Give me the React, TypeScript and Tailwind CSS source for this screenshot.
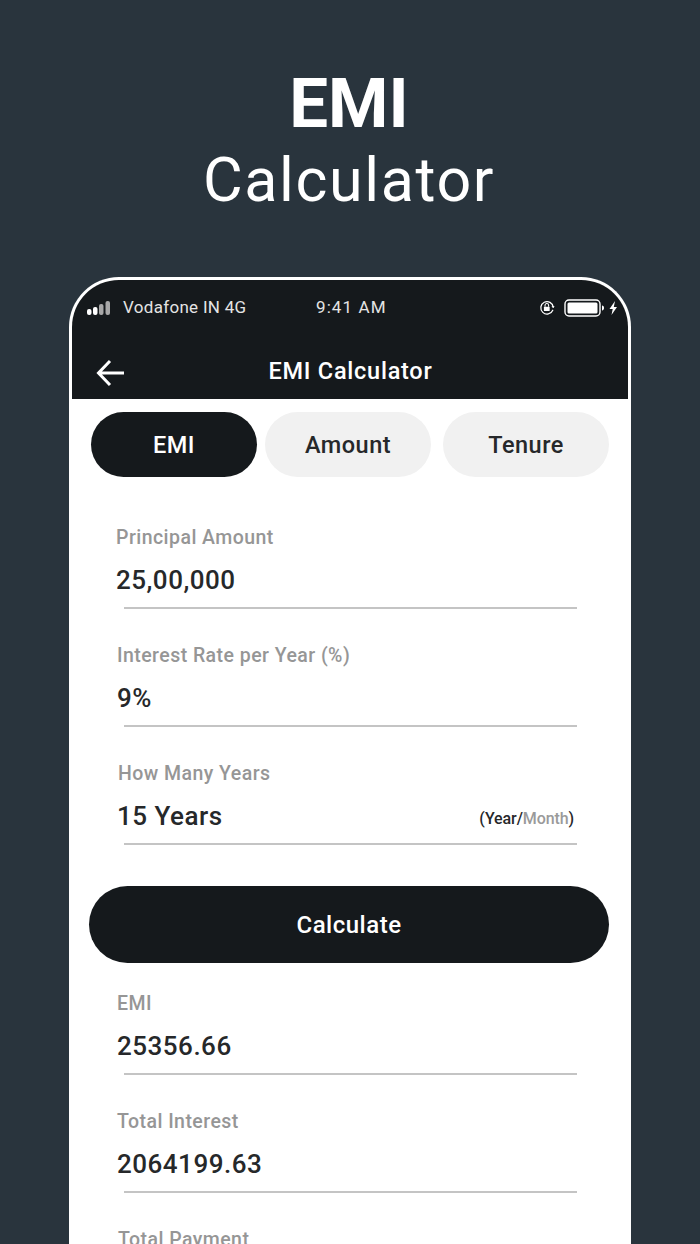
const font = { fontFamily: "Roboto, sans-serif" };

type FieldProps = {
  label: string;
  value: string;
  pad: string;
  note?: boolean;
};

function Field({ label, value, pad, note }: FieldProps) {
  return (
    <div className="h-[118px] pt-[11px]">
      <div className={`${pad} text-[19.5px] font-medium leading-[24px] tracking-[0.45px] text-[#969696]`}>{label}</div>
      <div className={`${pad} mt-[13px] flex h-[34px] items-center justify-between pr-[54px]`}>
        <span className={note ? "-ml-px text-[26px] font-medium leading-[34px] tracking-[0.5px] text-[#26282a]" : "text-[26px] font-medium leading-[34px] tracking-[0.5px] text-[#26282a]"}>{value}</span>
        {note && (
          <span className="mt-[6px] text-[16px] font-medium leading-[20px] tracking-[-0.1px] text-[#26282a]">
            (Year/<span className="text-[#9a9a9a]">Month</span>)
          </span>
        )}
      </div>
      <div className="ml-[52px] mt-[10px] h-[1.5px] w-[453px] bg-[#c4c4c4]" />
    </div>
  );
}

function Tab({ label, active }: { label: string; active?: boolean }) {
  return (
    <div
      className={
        active
          ? "flex h-[65px] w-[166px] items-center justify-center rounded-full bg-[#15191c] pt-[2px] text-[23.5px] font-medium tracking-[0.5px] text-white"
          : "flex h-[65px] w-[166px] items-center justify-center rounded-full bg-[#f1f1f1] pt-[2px] text-[23.5px] font-medium tracking-[0.5px] text-[#26282a]"
      }
    >
      {label}
    </div>
  );
}

function Signal() {
  return (
    <svg width="26" height="16" viewBox="0 0 26 16">
      <rect x="1" y="9" width="4.5" height="6" rx="2" fill="#fff" />
      <rect x="7" y="7" width="4.5" height="8" rx="2" fill="#fff" />
      <rect x="13" y="4" width="4.5" height="11" rx="2" fill="#a8a8a8" />
      <rect x="19.5" y="1" width="4.5" height="14" rx="2" fill="#a8a8a8" />
    </svg>
  );
}

function RotationLock() {
  return (
    <svg width="16" height="16" viewBox="0 0 18 18" fill="none">
      <path d="M15.5 11.5A7 7 0 1 1 16 8" stroke="#fff" strokeWidth="1.4" strokeLinecap="round" />
      <path d="M14 7l2 2 1.6-2.2" fill="#fff" />
      <rect x="5.5" y="7.5" width="6.5" height="5" rx="0.8" fill="#fff" />
      <path d="M6.8 7.5V6a2 2 0 0 1 4 0v1.5" stroke="#fff" strokeWidth="1.2" />
    </svg>
  );
}

function Battery() {
  return (
    <svg width="54" height="18" viewBox="0 0 54 18" fill="none">
      <rect x="1" y="1" width="35" height="16" rx="4" stroke="#fff" strokeWidth="1.4" />
      <rect x="3.5" y="3.5" width="30" height="11" rx="1.5" fill="#fff" />
      <path d="M38 6.5c1.5.3 2 1.2 2 2.5s-.5 2.2-2 2.5z" fill="#fff" />
      <path d="M51 2l-5.500 8h3.200l-1.200 6 5.500-8h-3.200z" fill="#fff" />
    </svg>
  );
}

export default function App() {
  return (
    <div className="h-[1244px] w-[700px] overflow-hidden bg-[#29343d]" style={font}>
      <div className="flex h-[277px] flex-col items-center pr-[2px] pt-[66px] text-white">
        <div className="text-[69px] font-bold leading-[76px]">EMI</div>
        <div className="text-[61px] font-normal leading-[76px] tracking-[1.6px]">Calculator</div>
      </div>

      <div className="mx-[69px] h-[967px] overflow-hidden rounded-t-[50px] border-x-[3px] border-t-[3px] border-white bg-white">
        <div className="h-[119px] bg-[#15191c] text-white">
          <div className="flex h-[55px] items-center pl-[14px] pr-[10px]">
            <Signal />
            <span className="ml-[11px] w-[193px] text-[17px] tracking-[0.3px] text-[#e4e4e4]">Vodafone IN 4G</span>
            <span className="text-[17px] tracking-[1.1px] text-[#e4e4e4]">9:41 AM</span>
            <div className="ml-auto flex items-center gap-[9px]">
              <RotationLock />
              <Battery />
            </div>
          </div>
          <div className="relative flex h-[64px] items-center justify-center pl-[1px] pt-[9px]">
            <svg className="absolute left-[24px] top-[23px]" width="30" height="30" viewBox="0 0 30 30" fill="none">
              <path d="M2.500 15H28M14 3L2.500 15 14 27" stroke="#fff" strokeWidth="3" />
            </svg>
            <span className="text-[23.5px] font-medium tracking-[0.75px]">EMI Calculator</span>
          </div>
        </div>

        <div className="flex pl-[19px] pt-[13px]">
          <Tab label="EMI" active />
          <div className="ml-[8px]">
            <Tab label="Amount" />
          </div>
          <div className="ml-[12px]">
            <Tab label="Tenure" />
          </div>
        </div>

        <div className="pt-[38px]">
          <Field label="Principal Amount" value="25,00,000" pad="pl-[44px]" />
          <Field label="Interest Rate per Year (%)" value="9%" pad="pl-[45px]" />
          <Field label="How Many Years" value="15 Years" pad="pl-[46px]" note />
        </div>

        <div className="ml-[17px] mt-[17px] flex h-[77px] w-[520px] items-center justify-center rounded-full bg-[#15191c] text-[24px] font-medium tracking-[0.5px] text-white">
          Calculate
        </div>

        <div className="mt-[18px]">
          <Field label="EMI" value="25356.66" pad="pl-[45px]" />
          <Field label="Total Interest" value="2064199.63" pad="pl-[45px]" />
          <Field label="Total Payment" value="" pad="pl-[46px]" />
        </div>
      </div>
    </div>
  );
}
